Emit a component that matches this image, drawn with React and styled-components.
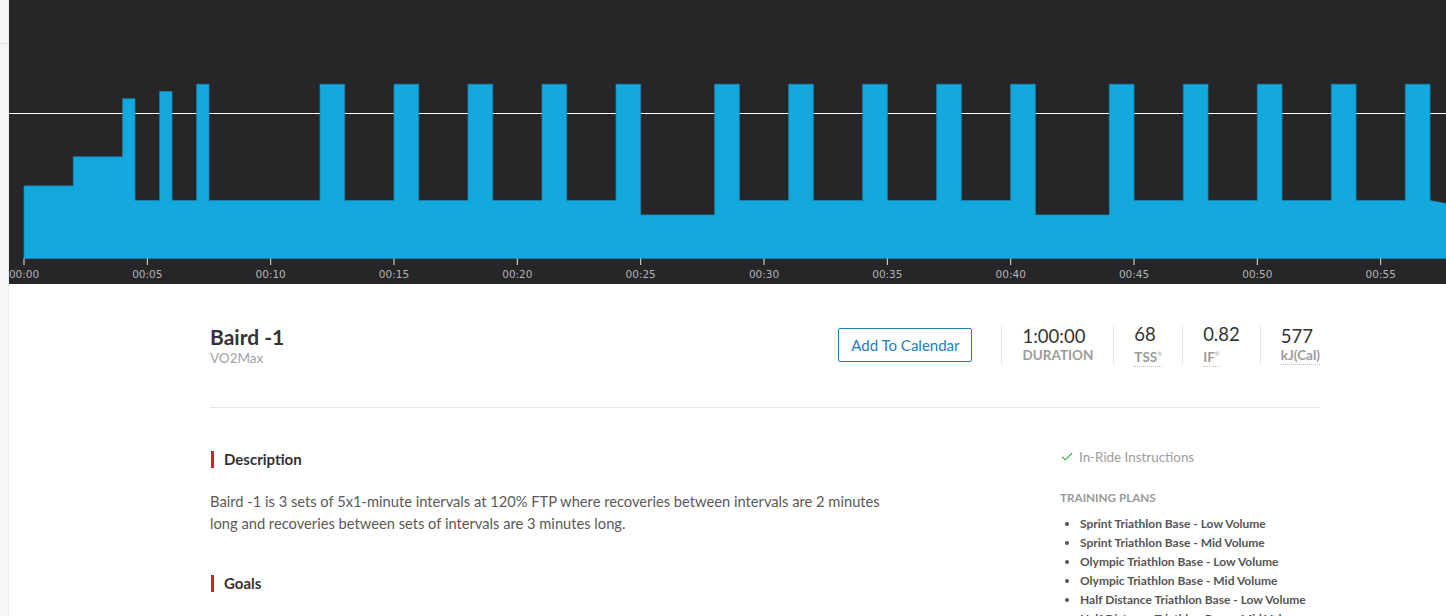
import styled, { createGlobalStyle } from "styled-components";
import { Check } from "lucide-react";

const GlobalStyle = createGlobalStyle`
  body {
    margin: 0;
    font-family: Lato, "Liberation Sans", sans-serif;
    background: #fff;
    overflow: hidden;
  }
`;

const Page = styled.div`
  display: flex;
  min-height: 616px;
`;
const Sidebar = styled.div`
  width: 8px;
  flex-shrink: 0;
  background: #f6f6f6;
  border-right: 1px solid #ececec;
`;
const SidebarTop = styled.div`
  height: 43px;
  border-bottom: 1px solid #e2e2e2;
`;
const Main = styled.div`
  flex: 1;
  min-width: 0;
  overflow: hidden;
`;
const ChartBox = styled.div`
  height: 284px;
  background: #262528;
  overflow: hidden;
`;
const Content = styled.div`
  width: 1110px;
  margin-left: 201px;
`;
const Header = styled.div`
  display: flex;
  align-items: center;
  justify-content: space-between;
  padding: 40px 0 41px;
  border-bottom: 1px solid #e6e6e6;
`;
const Title = styled.h1`
  margin: 0;
  font-size: 21px;
  line-height: 26px;
  font-weight: 700;
  color: #333;
`;
const Subtitle = styled.div`
  font-size: 13.5px;
  line-height: 16px;
  color: #a3a3a3;
`;
const Actions = styled.div`
  display: flex;
  align-items: center;
`;
const CalendarButton = styled.button`
  height: 34px;
  padding: 0 12px;
  margin-right: 29px;
  background: #fff;
  border: 1px solid #1c7dbf;
  border-radius: 2px;
  color: #1c7dbf;
  font-family: inherit;
  font-size: 15px;
`;
const Stat = styled.div`
  display: flex;
  flex-direction: column;
  justify-content: center;
  height: 40px;
  padding: 0 ${(p) => (p.$last ? "0" : "20px")} 0 20px;
  border-left: 1px solid #e6e6e6;
`;
const StatValue = styled.div`
  font-size: 18.5px;
  line-height: 21px;
  color: #333;
`;
const StatLabel = styled.div`
  font-size: 13.5px;
  line-height: 17px;
  font-weight: 700;
  color: #9b9b9b;
`;
const Abbr = styled.span`
  border-bottom: 1px dotted #bdbdbd;
  padding-bottom: 1px;
  sup {
    font-size: 6px;
    vertical-align: 6px;
    color: #bbb;
  }
`;
const Body = styled.div`
  display: flex;
  padding-top: 43px;
`;
const Left = styled.div`
  flex: 1;
`;
const SectionTitle = styled.h3`
  margin: 0 0 0 1px;
  border-left: 3px solid #d0202e;
  padding-left: 10px;
  font-size: 15px;
  line-height: 17px;
  font-weight: 700;
  color: #333;
`;
const Paragraph = styled.p`
  width: 700px;
  margin: 22px 0 41px;
  font-size: 14.7px;
  line-height: 22px;
  color: #5a5a5a;
`;
const Right = styled.div`
  width: 260px;
`;
const Instructions = styled.div`
  display: flex;
  align-items: center;
  gap: 5px;
  margin-top: -2px;
  font-size: 13.4px;
  line-height: 16px;
  color: #9d9d9d;
`;
const PlansTitle = styled.div`
  margin-top: 25px;
  font-size: 11.7px;
  line-height: 14px;
  font-weight: 700;
  color: #9a9a9a;
`;
const PlanList = styled.ul`
  margin: 10px 0 0;
  padding-left: 20px;
  li {
    font-size: 12px;
    line-height: 19px;
    font-weight: 700;
    color: #555;
  }
`;

const PX_MIN = 24.667;
const X0 = 15;
const BASE = 258.5;
const yOf = (p) => BASE - p * 1.452;

const buildSegments = () => {
  const segs = [
    [2, 50], [2, 70], [0.5, 110], [1, 40], [0.5, 115], [1, 40], [0.5, 120], [4.5, 40],
  ];
  for (let s = 0; s < 3; s++) {
    for (let i = 0; i < 5; i++) {
      segs.push([1, 120]);
      if (i < 4) segs.push([2, 40]);
    }
    if (s < 2) segs.push([3, 30]);
  }
  segs.push([3, 40, 30]);
  return segs;
};

const buildPath = () => {
  let t = 0;
  let d = `M${X0},${BASE}`;
  buildSegments().forEach(([dur, p1, p2]) => {
    const xa = X0 + t * PX_MIN;
    const xb = X0 + (t + dur) * PX_MIN;
    d += ` L${xa},${yOf(p1)} L${xb},${yOf(p2 ?? p1)}`;
    t += dur;
  });
  d += ` L${X0 + t * PX_MIN},${BASE} Z`;
  return d;
};

const WorkoutChart = () => {
  const ticks = Array.from({ length: 12 }, (_, k) => k * 5);
  return (
    <svg width="1437" height="284" viewBox="0 0 1437 284">
      <line x1="0" x2="1437" y1="113.5" y2="113.5" stroke="#fff" strokeWidth="1" />
      <path d={buildPath()} fill="#13a9dc" stroke="#1b86b3" strokeWidth="0.8" />
      {ticks.map((m) => {
        const x = X0 + m * PX_MIN;
        return (
          <g key={m}>
            <line x1={x} x2={x} y1={BASE} y2={265} stroke="#e6e6e6" strokeWidth="1" />
            <text
              x={x}
              y={278}
              textAnchor="middle"
              fill="#b4b4b4"
              fontSize="10.5"
              fontFamily="'DejaVu Sans', sans-serif"
            >
              {`00:${String(m).padStart(2, "0")}`}
            </text>
          </g>
        );
      })}
    </svg>
  );
};

const plans = [
  "Sprint Triathlon Base - Low Volume",
  "Sprint Triathlon Base - Mid Volume",
  "Olympic Triathlon Base - Low Volume",
  "Olympic Triathlon Base - Mid Volume",
  "Half Distance Triathlon Base - Low Volume",
  "Half Distance Triathlon Base - Mid Volume",
];

const App = () => {
  return (
    <Page>
      <GlobalStyle />
      <Sidebar>
        <SidebarTop />
      </Sidebar>
      <Main>
        <ChartBox>
          <WorkoutChart />
        </ChartBox>
        <Content>
          <Header>
            <div>
              <Title>Baird -1</Title>
              <Subtitle>VO2Max</Subtitle>
            </div>
            <Actions>
              <CalendarButton>Add To Calendar</CalendarButton>
              <Stat>
                <StatValue>1:00:00</StatValue>
                <StatLabel>DURATION</StatLabel>
              </Stat>
              <Stat>
                <StatValue>68</StatValue>
                <StatLabel>
                  <Abbr>
                    TSS<sup>®</sup>
                  </Abbr>
                </StatLabel>
              </Stat>
              <Stat>
                <StatValue>0.82</StatValue>
                <StatLabel>
                  <Abbr>
                    IF<sup>®</sup>
                  </Abbr>
                </StatLabel>
              </Stat>
              <Stat $last>
                <StatValue>577</StatValue>
                <StatLabel>
                  <Abbr>kJ(Cal)</Abbr>
                </StatLabel>
              </Stat>
            </Actions>
          </Header>
          <Body>
            <Left>
              <SectionTitle>Description</SectionTitle>
              <Paragraph>
                Baird -1 is 3 sets of 5x1-minute intervals at 120% FTP where recoveries between
                intervals are 2 minutes long and recoveries between sets of intervals are 3
                minutes long.
              </Paragraph>
              <SectionTitle>Goals</SectionTitle>
            </Left>
            <Right>
              <Instructions>
                <Check size={14} color="#3cb54a" strokeWidth={2} />
                In-Ride Instructions
              </Instructions>
              <PlansTitle>TRAINING PLANS</PlansTitle>
              <PlanList>
                {plans.map((p) => (
                  <li key={p}>{p}</li>
                ))}
              </PlanList>
            </Right>
          </Body>
        </Content>
      </Main>
    </Page>
  );
};

export default App;
